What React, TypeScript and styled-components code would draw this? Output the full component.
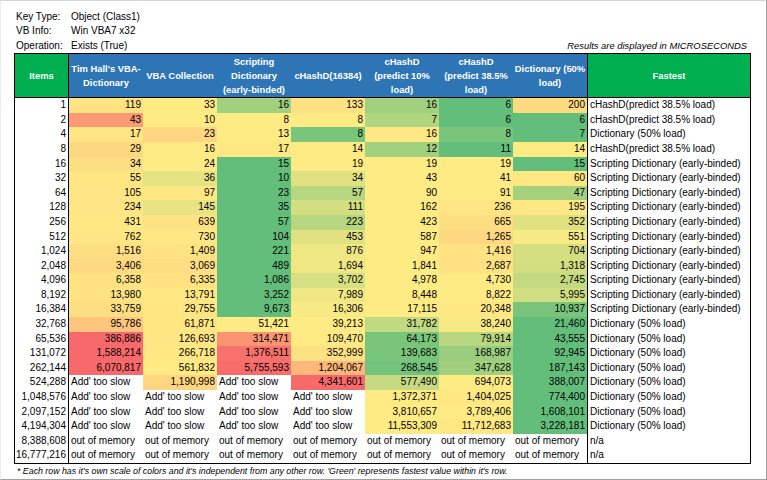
import React from 'react'
import styled, { createGlobalStyle } from 'styled-components'

const GlobalStyle = createGlobalStyle`
  * {
    box-sizing: border-box;
  }
  body {
    margin: 0;
    background: #fff;
    font-family: 'Liberation Sans', Arial, sans-serif;
    color: #000;
  }
`

// -1 = green (fastest), 0 = yellow, 1 = red (slowest)
const heatColor = (t: number) => {
  const green = [99, 190, 123]
  const yellow = [255, 235, 132]
  const red = [248, 105, 107]
  const to = t < 0 ? green : red
  const k = Math.abs(t)
  return `rgb(${yellow.map((y, i) => Math.round(y + (to[i] - y) * k)).join(',')})`
}

const SLOW = "Add' too slow"
const OOM = 'out of memory'
const CH = 'cHashD(predict 38.5% load)'
const SD = 'Scripting Dictionary (early-binded)'
const DI = 'Dictionary (50% load)'

type Row = {
  items: string
  values: string[]
  heat: (number | null)[]
  fastest: string
}

const rows: Row[] = [
  { items: '1', values: ['119', '33', '16', '133', '16', '6', '200'], heat: [0.06, 0, -0.6, 0.08, -0.6, -1, 0.13], fastest: CH },
  { items: '2', values: ['43', '10', '8', '8', '7', '6', '6'], heat: [0.62, 0, 0, 0, -0.5, -1, -1], fastest: CH },
  { items: '4', values: ['17', '23', '13', '8', '16', '8', '7'], heat: [0.05, 0.17, 0, -0.85, 0.02, -0.85, -1], fastest: DI },
  { items: '8', values: ['29', '16', '17', '14', '12', '11', '14'], heat: [0.15, 0, 0.02, 0, -0.6, -1, 0], fastest: CH },
  { items: '16', values: ['34', '24', '15', '19', '19', '19', '15'], heat: [0.1, 0.01, -1, 0, 0, 0, -1], fastest: SD },
  { items: '32', values: ['55', '36', '10', '34', '43', '41', '60'], heat: [0.04, -0.17, -1, -0.2, 0, 0, 0.02], fastest: SD },
  { items: '64', values: ['105', '97', '23', '57', '90', '91', '47'], heat: [0.05, 0.02, -1, -0.47, 0, 0, -0.58], fastest: SD },
  { items: '128', values: ['234', '145', '35', '111', '162', '236', '195'], heat: [0.05, -0.15, -1, -0.28, 0, 0.05, 0.02], fastest: SD },
  { items: '256', values: ['431', '639', '57', '223', '423', '665', '352'], heat: [0.02, 0.07, -1, -0.47, 0.01, 0.1, -0.2], fastest: SD },
  { items: '512', values: ['762', '730', '104', '453', '587', '1,265', '551'], heat: [0.05, 0.03, -1, -0.2, 0, 0.15, -0.05], fastest: SD },
  { items: '1,024', values: ['1,516', '1,409', '221', '876', '947', '1,416', '704'], heat: [0.1, 0.06, -1, -0.1, 0, 0.06, -0.27], fastest: SD },
  { items: '2,048', values: ['3,406', '3,069', '489', '1,694', '1,841', '2,687', '1,318'], heat: [0.14, 0.1, -1, -0.1, 0, 0.08, -0.28], fastest: SD },
  { items: '4,096', values: ['6,358', '6,335', '1,086', '3,702', '4,978', '4,730', '2,745'], heat: [0.07, 0.06, -1, -0.26, 0, 0, -0.38], fastest: SD },
  { items: '8,192', values: ['13,980', '13,791', '3,252', '7,989', '8,448', '8,822', '5,995'], heat: [0.07, 0.03, -1, -0.1, 0, 0, -0.3], fastest: SD },
  { items: '16,384', values: ['33,759', '29,755', '9,673', '16,306', '17,115', '20,348', '10,937'], heat: [0.1, 0.04, -1, -0.05, 0, 0.02, -0.85], fastest: SD },
  { items: '32,768', values: ['95,786', '61,871', '51,421', '39,213', '31,782', '38,240', '21,460'], heat: [0.29, 0.04, 0.01, 0, -0.4, -0.05, -1], fastest: DI },
  { items: '65,536', values: ['386,886', '126,693', '314,471', '109,470', '64,173', '79,914', '43,555'], heat: [1, 0.05, 0.67, 0, -0.85, -0.45, -1], fastest: DI },
  { items: '131,072', values: ['1,588,214', '266,718', '1,376,511', '352,999', '139,683', '168,987', '92,945'], heat: [1, 0.02, 0.93, 0.08, -0.85, -0.65, -1], fastest: DI },
  { items: '262,144', values: ['6,070,817', '561,832', '5,755,593', '1,204,067', '268,545', '347,628', '187,143'], heat: [1, 0.01, 0.97, 0.4, -0.9, -0.6, -1], fastest: DI },
  { items: '524,288', values: [SLOW, '1,190,998', SLOW, '4,341,601', '577,490', '694,073', '388,007'], heat: [null, 0.17, null, 1, -0.37, 0, -1], fastest: DI },
  { items: '1,048,576', values: [SLOW, SLOW, SLOW, SLOW, '1,372,371', '1,404,025', '774,400'], heat: [null, null, null, null, 0, 0.02, -1], fastest: DI },
  { items: '2,097,152', values: [SLOW, SLOW, SLOW, SLOW, '3,810,657', '3,789,406', '1,608,101'], heat: [null, null, null, null, 0, 0, -1], fastest: DI },
  { items: '4,194,304', values: [SLOW, SLOW, SLOW, SLOW, '11,553,309', '11,712,683', '3,228,181'], heat: [null, null, null, null, 0, 0.03, -1], fastest: DI },
  { items: '8,388,608', values: [OOM, OOM, OOM, OOM, OOM, OOM, OOM], heat: [null, null, null, null, null, null, null], fastest: 'n/a' },
  { items: '16,777,216', values: [OOM, OOM, OOM, OOM, OOM, OOM, OOM], heat: [null, null, null, null, null, null, null], fastest: 'n/a' },
]

const headers: string[][] = [
  ["Tim Hall's VBA-", 'Dictionary'],
  ['VBA Collection'],
  ['Scripting', 'Dictionary', '(early-binded)'],
  ['cHashD(16384)'],
  ['cHashD', '(predict 10%', 'load)'],
  ['cHashD', '(predict 38.5%', 'load)'],
  ['Dictionary (50%', 'load)'],
]

const App = () => {
  return (
    <>
      <GlobalStyle />
      <Frame>
        <Info>
          <span>Key Type:</span>
          <span>Object (Class1)</span>
          <span>VB Info:</span>
          <span>Win VBA7 x32</span>
          <span>Operation:</span>
          <span>Exists (True)</span>
          <Note>Results are displayed in MICROSECONDS</Note>
        </Info>

        <Table>
          <HeadCell $tone="green" $edge="right">
            Items
          </HeadCell>
          {headers.map((lines, i) => (
            <HeadCell key={i} $tone="blue">
              <span>
                {lines.map((l, j) => (
                  <React.Fragment key={j}>
                    {j > 0 && <br />}
                    {l}
                  </React.Fragment>
                ))}
              </span>
            </HeadCell>
          ))}
          <HeadCell $tone="green" $edge="left">
            Fastest
          </HeadCell>

          {rows.map((row) => (
            <React.Fragment key={row.items}>
              <ItemCell>{row.items}</ItemCell>
              {row.values.map((v, i) => {
                const h = row.heat[i]
                return (
                  <ValueCell
                    key={i}
                    $bg={h === null ? '#fff' : heatColor(h)}
                    $text={h === null}
                  >
                    {v}
                  </ValueCell>
                )
              })}
              <FastCell>{row.fastest}</FastCell>
            </React.Fragment>
          ))}
        </Table>

        <Footnote>
          * Each row has it's own scale of colors and it's independent from any other row. 'Green'
          represents fastest value within it's row.
        </Footnote>
      </Frame>
    </>
  )
}

export default App

const Frame = styled.div`
  width: 767px;
  height: 480px;
  padding: 9px 0 0 13px;
  border-top: 1px solid #d4d4d4;
  border-left: 1px solid #ececec;
  border-right: 1px solid #a0a0a0;
  border-bottom: 1px solid #a0a0a0;
  font-size: 10px;
`

const Info = styled.div`
  display: grid;
  grid-template-columns: 55px auto 1fr;
  grid-auto-rows: 14.4px;
  align-items: center;
  width: 737px;
  padding-left: 2px;
  font-size: 10px;
  line-height: 14.4px;

  span:nth-child(odd) {
    grid-column: 1;
  }
  span:nth-child(even) {
    grid-column: 2;
  }
`

const Note = styled.div`
  grid-column: 3;
  grid-row: 3;
  justify-self: end;
  padding-right: 4px;
  font-style: italic;
  font-size: 9.4px;
`

const Table = styled.div`
  display: grid;
  grid-template-columns: 54px repeat(7, 74px) 163px;
  grid-template-rows: 44px repeat(25, 14.6px);
  width: 737px;
  border: 1px solid #000;
`

const HeadCell = styled.div<{ $tone: 'green' | 'blue'; $edge?: 'left' | 'right' }>`
  display: flex;
  align-items: center;
  justify-content: center;
  text-align: center;
  background: ${(p) => (p.$tone === 'green' ? '#00b050' : '#2e75b6')};
  color: #fff;
  font-weight: bold;
  font-size: 9.4px;
  line-height: 14px;
  white-space: nowrap;
  border-bottom: 1px solid #000;
  border-left: ${(p) => (p.$edge === 'left' ? '1px solid #000' : 'none')};
  border-right: ${(p) => (p.$edge === 'right' ? '1px solid #000' : 'none')};
`

const ItemCell = styled.div`
  border-right: 1px solid #000;
  text-align: right;
  padding-right: 2px;
  line-height: 14.6px;
  white-space: nowrap;
`

const ValueCell = styled.div<{ $bg: string; $text: boolean }>`
  background: ${(p) => p.$bg};
  text-align: ${(p) => (p.$text ? 'left' : 'right')};
  padding: ${(p) => (p.$text ? '0 0 0 2px' : '0 2px 0 0')};
  line-height: 14.6px;
  white-space: nowrap;
  overflow: hidden;
`

const FastCell = styled.div`
  border-left: 1px solid #000;
  padding-left: 2px;
  line-height: 14.6px;
  white-space: nowrap;
`

const Footnote = styled.div`
  padding-left: 3px;
  font-style: italic;
  font-size: 8.8px;
  line-height: 14px;
  white-space: nowrap;
`
